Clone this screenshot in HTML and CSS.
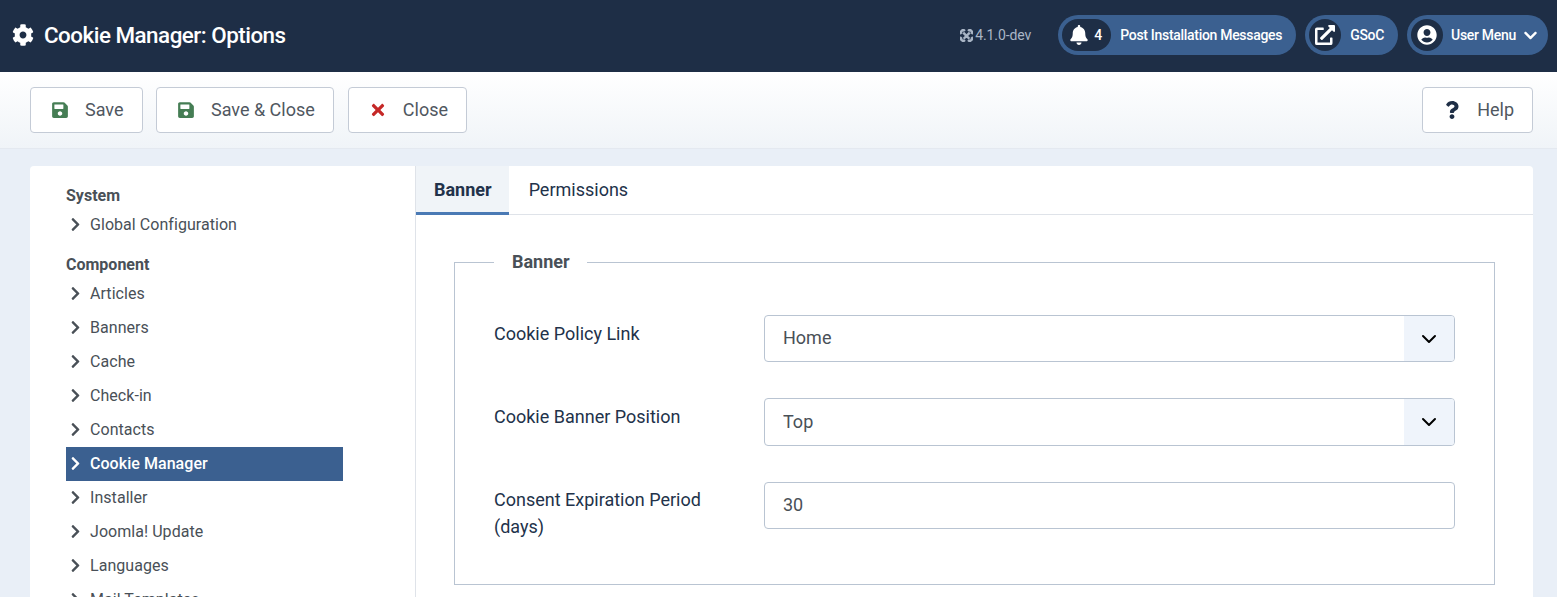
FILE: index.html
```html
<!DOCTYPE html>
<html lang="en">
<head>
<meta charset="utf-8">
<title>Cookie Manager: Options</title>
<link rel="stylesheet" href="styles.css">
</head>
<body>
<svg class="defs" aria-hidden="true">
  <symbol id="i-cog" viewBox="0 0 512 512"><path d="M487.4 315.7l-42.6-24.6c4.3-23.2 4.3-47 0-70.2l42.6-24.6c4.9-2.8 7.1-8.6 5.5-14-11.1-35.6-30-67.8-54.7-94.6-3.8-4.1-10-5.1-14.8-2.3L380.8 110c-17.9-15.4-38.5-27.3-60.8-35.1V25.8c0-5.6-3.9-10.5-9.4-11.7-36.7-8.2-74.3-7.8-109.2 0-5.5 1.2-9.4 6.1-9.4 11.7V75c-22.2 7.9-42.8 19.8-60.8 35.1L88.7 85.5c-4.9-2.8-11-1.9-14.8 2.3-24.7 26.7-43.6 58.9-54.7 94.6-1.7 5.4.6 11.2 5.5 14L67.3 221c-4.3 23.2-4.3 47 0 70.2l-42.6 24.6c-4.9 2.8-7.1 8.6-5.5 14 11.1 35.6 30 67.8 54.7 94.6 3.8 4.1 10 5.1 14.8 2.3l42.6-24.6c17.9 15.4 38.5 27.3 60.8 35.1v49.2c0 5.6 3.9 10.5 9.4 11.7 36.7 8.2 74.3 7.8 109.2 0 5.5-1.2 9.4-6.1 9.4-11.7v-49.2c22.2-7.9 42.8-19.8 60.8-35.1l42.6 24.6c4.9 2.8 11 1.9 14.8-2.3 24.7-26.7 43.6-58.9 54.7-94.6 1.5-5.5-.7-11.3-5.6-14.1zM256 336c-44.1 0-80-35.9-80-80s35.9-80 80-80 80 35.9 80 80-35.9 80-80 80z"/></symbol>
  <symbol id="i-save" viewBox="0 0 448 512"><path d="M433.941 129.941l-83.882-83.882A48 48 0 0 0 316.118 32H48C21.49 32 0 53.49 0 80v352c0 26.51 21.49 48 48 48h352c26.51 0 48-21.49 48-48V163.882a48 48 0 0 0-14.059-33.941zM224 416c-35.346 0-64-28.654-64-64 0-35.346 28.654-64 64-64s64 28.654 64 64c0 35.346-28.654 64-64 64zm96-304.52V212c0 6.627-5.373 12-12 12H76c-6.627 0-12-5.373-12-12V108c0-6.627 5.373-12 12-12h228.52c3.183 0 6.235 1.264 8.485 3.515l3.48 3.48A11.996 11.996 0 0 1 320 111.48z"/></symbol>
  <symbol id="i-times" viewBox="0 0 352 512"><path d="M242.72 256l100.07-100.07c12.28-12.28 12.28-32.19 0-44.48l-22.24-22.24c-12.28-12.28-32.19-12.28-44.48 0L176 189.28 75.93 89.21c-12.28-12.28-32.19-12.28-44.48 0L9.21 111.45c-12.28 12.28-12.28 32.19 0 44.48L109.28 256 9.21 356.07c-12.28 12.28-12.28 32.19 0 44.48l22.24 22.24c12.28 12.28 32.2 12.28 44.48 0L176 322.72l100.07 100.07c12.28 12.28 32.2 12.28 44.48 0l22.24-22.24c12.28-12.28 12.28-32.19 0-44.48L242.72 256z"/></symbol>
  <symbol id="i-question" viewBox="0 0 384 512"><path d="M202.021 0C122.202 0 70.503 32.703 29.914 91.026c-7.363 10.58-5.093 25.086 5.178 32.874l43.138 32.709c10.373 7.865 25.132 6.026 33.253-4.148 25.049-31.381 43.63-49.449 82.757-49.449 30.764 0 68.816 19.799 68.816 49.631 0 22.552-18.617 34.134-48.993 51.164-35.423 19.86-82.299 44.576-82.299 106.405V320c0 13.255 10.745 24 24 24h72.471c13.255 0 24-10.745 24-24v-5.773c0-42.86 125.268-44.645 125.268-160.627C377.504 66.256 286.902 0 202.021 0zM192 373.459c-38.196 0-69.271 31.075-69.271 69.271 0 38.195 31.075 69.27 69.271 69.27s69.271-31.075 69.271-69.271-31.075-69.27-69.271-69.27z"/></symbol>
  <symbol id="i-bell" viewBox="0 0 448 512"><path d="M224 512c35.32 0 63.97-28.65 63.97-64H160.03c0 35.35 28.65 64 63.97 64zm215.39-149.71c-19.32-20.76-55.47-51.99-55.47-154.29 0-77.7-54.48-139.9-127.94-155.16V32c0-17.67-14.32-32-31.98-32s-31.98 14.33-31.98 32v20.84C118.56 68.1 64.08 130.3 64.08 208c0 102.3-36.15 133.53-55.47 154.29-6 6.45-8.66 14.16-8.61 21.71.11 16.4 12.98 32 32.1 32h383.8c19.12 0 32-15.6 32.1-32 .05-7.55-2.61-15.27-8.61-21.71z"/></symbol>
  <symbol id="i-ext" viewBox="0 0 512 512"><path d="M432,320H400a16,16,0,0,0-16,16V448H64V128H208a16,16,0,0,0,16-16V80a16,16,0,0,0-16-16H48A48,48,0,0,0,0,112V464a48,48,0,0,0,48,48H400a48,48,0,0,0,48-48V336A16,16,0,0,0,432,320ZM488,0h-128c-21.37,0-32.05,25.91-17,41l35.73,35.73L135,320.37a24,24,0,0,0,0,34L157.67,377a24,24,0,0,0,34,0L435.28,133.32,471,169c15,15,41,4.5,41-17V24A24,24,0,0,0,488,0Z"/></symbol>
  <symbol id="i-user" viewBox="0 0 496 512"><path d="M248 8C111 8 0 119 0 256s111 248 248 248 248-111 248-248S385 8 248 8zm0 96c48.6 0 88 39.4 88 88s-39.4 88-88 88-88-39.4-88-88 39.4-88 88-88zm0 344c-58.7 0-111.3-26.6-146.5-68.2 18.8-35.4 55.6-59.8 98.5-59.8 2.4 0 4.8.4 7.1 1.1 13 4.2 26.6 6.9 40.9 6.9 14.3 0 28-2.7 40.9-6.9 2.3-.7 4.7-1.1 7.1-1.1 42.9 0 79.7 24.4 98.5 59.8C359.3 421.4 306.7 448 248 448z"/></symbol>
  <symbol id="i-right" viewBox="0 0 320 512"><path d="M285.476 272.971L91.132 467.314c-9.373 9.373-24.569 9.373-33.941 0l-22.667-22.667c-9.357-9.357-9.375-24.522-.04-33.901L188.505 256 34.484 101.255c-9.335-9.379-9.317-24.544.04-33.901l22.667-22.667c9.373-9.373 24.569-9.373 33.941 0L285.475 239.03c9.373 9.372 9.373 24.568.001 33.941z"/></symbol>
  <symbol id="i-down" viewBox="0 0 448 512"><path d="M207.029 381.476L12.686 187.132c-9.373-9.373-9.373-24.569 0-33.941l22.667-22.667c9.357-9.357 24.522-9.375 33.901-.04L224 284.505l154.745-154.021c9.379-9.335 24.544-9.317 33.901.04l22.667 22.667c9.373 9.373 9.373 24.569 0 33.941L240.971 381.476c-9.373 9.372-24.569 9.372-33.942 0z"/></symbol>
</svg>

<header class="topbar">
  <svg class="title-icon"><use href="#i-cog"/></svg>
  <h1 class="title">Cookie Manager: Options</h1>
  <div class="top-tools">
    <span class="version">
      <svg class="joomla" viewBox="0 0 16 16"><path d="M4 4.5 11.5 12M12 4.5 4.5 12M2 6a2.4 2.4 0 0 1 4-3.6M10 2.4A2.4 2.4 0 0 1 14 6M14 10a2.4 2.4 0 0 1-4 3.6M6 13.6A2.4 2.4 0 0 1 2 10"/></svg>4.1.0-dev
    </span>
    <a class="pill pill-messages" href="#">
      <span class="pill-badge badge-wide"><svg class="bell"><use href="#i-bell"/></svg><span class="count">4</span></span>
      <span class="pill-text">Post Installation Messages</span>
    </a>
    <a class="pill pill-gsoc" href="#">
      <span class="pill-badge"><svg class="pill-icon"><use href="#i-ext"/></svg></span>
      <span class="pill-text">GSoC</span>
    </a>
    <a class="pill pill-user" href="#">
      <span class="pill-badge"><svg class="pill-icon"><use href="#i-user"/></svg></span>
      <span class="pill-text">User Menu</span>
      <svg class="pill-caret"><use href="#i-down"/></svg>
    </a>
  </div>
</header>

<nav class="toolbar">
  <button class="btn btn-save" type="button"><svg class="btn-icon green"><use href="#i-save"/></svg>Save</button>
  <button class="btn btn-saveclose" type="button"><svg class="btn-icon green"><use href="#i-save"/></svg>Save &amp; Close</button>
  <button class="btn btn-close" type="button"><svg class="btn-icon red"><use href="#i-times"/></svg>Close</button>
  <button class="btn btn-help" type="button"><svg class="btn-icon navy"><use href="#i-question"/></svg>Help</button>
</nav>

<main class="content">
  <div class="card">
    <aside class="sidebar">
      <h2 class="side-heading">System</h2>
      <ul class="side-list">
        <li><a class="side-link" href="#"><svg class="chev"><use href="#i-right"/></svg>Global Configuration</a></li>
      </ul>
      <h2 class="side-heading">Component</h2>
      <ul class="side-list">
        <li><a class="side-link" href="#"><svg class="chev"><use href="#i-right"/></svg>Articles</a></li>
        <li><a class="side-link" href="#"><svg class="chev"><use href="#i-right"/></svg>Banners</a></li>
        <li><a class="side-link" href="#"><svg class="chev"><use href="#i-right"/></svg>Cache</a></li>
        <li><a class="side-link" href="#"><svg class="chev"><use href="#i-right"/></svg>Check-in</a></li>
        <li><a class="side-link" href="#"><svg class="chev"><use href="#i-right"/></svg>Contacts</a></li>
        <li><a class="side-link active" href="#"><svg class="chev"><use href="#i-right"/></svg>Cookie Manager</a></li>
        <li><a class="side-link" href="#"><svg class="chev"><use href="#i-right"/></svg>Installer</a></li>
        <li><a class="side-link" href="#"><svg class="chev"><use href="#i-right"/></svg>Joomla! Update</a></li>
        <li><a class="side-link" href="#"><svg class="chev"><use href="#i-right"/></svg>Languages</a></li>
        <li><a class="side-link" href="#"><svg class="chev"><use href="#i-right"/></svg>Mail Templates</a></li>
      </ul>
    </aside>
    <section class="panel">
      <div class="tabs">
        <button class="tab tab-active" type="button">Banner</button>
        <button class="tab" type="button">Permissions</button>
      </div>
      <form class="tab-body">
        <fieldset class="group">
          <legend class="group-title">Banner</legend>
          <div class="field">
            <label class="field-label" for="f1">Cookie Policy Link</label>
            <div class="select-wrap">
              <select class="control" id="f1"><option>Home</option></select>
              <span class="select-arrow"><svg viewBox="0 0 16 16"><path d="M2 5l6 6 6-6"/></svg></span>
            </div>
          </div>
          <div class="field">
            <label class="field-label" for="f2">Cookie Banner Position</label>
            <div class="select-wrap">
              <select class="control" id="f2"><option>Top</option></select>
              <span class="select-arrow"><svg viewBox="0 0 16 16"><path d="M2 5l6 6 6-6"/></svg></span>
            </div>
          </div>
          <div class="field">
            <label class="field-label" for="f3">Consent Expiration Period (days)</label>
            <input class="control" id="f3" type="text" value="30">
          </div>
        </fieldset>
      </form>
    </section>
  </div>
</main>
</body>
</html>
```

FILE: styles.css
```css
* { box-sizing: border-box; }
html, body { height: 100%; overflow: hidden; }
body {
  margin: 0;
  background: #e9eff7;
  color: #22324a;
  font-family: Roboto, "Liberation Sans", sans-serif;
  font-size: 16px;
}
a { text-decoration: none; color: inherit; }
.defs { display: none; }

.topbar {
  display: flex;
  align-items: center;
  height: 72px;
  padding: 0 9px 2px 12px;
  background: #1e2e46;
  color: #fff;
}
.title-icon { width: 22px; height: 22px; fill: #fff; margin-right: 10px; }
.title { margin: 0; font-size: 22.4px; font-weight: 500; letter-spacing: -0.5px; }
.top-tools { display: flex; align-items: center; margin-left: auto; }
.version {
  display: flex;
  align-items: center;
  margin-right: 27px;
  font-size: 14px;
  letter-spacing: -0.1px;
  color: #a9b5c5;
}
.joomla { width: 13px; height: 13px; fill: none; stroke: #a9b5c5; stroke-width: 3; margin-right: 2px; }
.pill {
  display: flex;
  align-items: center;
  height: 40px;
  margin-left: 9px;
  padding: 0 14px 0 4px;
  border-radius: 20px;
  background: #3b6090;
  color: #fff;
  font-size: 14px;
  font-weight: 500;
}
.pill-badge {
  display: flex;
  align-items: center;
  justify-content: center;
  width: 32px;
  height: 32px;
  border-radius: 16px;
  background: #1e2e46;
  margin-right: 8px;
}
.pill-gsoc .pill-badge { margin-right: 9px; }
.badge-wide { width: 49px; margin-right: 9px; padding-right: 1px; }
.bell { width: 18px; height: 20px; fill: #fff; margin-right: 6px; }
.count { font-size: 14px; }
.pill-icon { width: 20px; height: 20px; fill: #fff; }
.pill-text { letter-spacing: -0.3px; }
.pill-caret { width: 13px; height: 15px; fill: #fff; margin-left: 8px; }
.pill-messages { margin-left: 0; }
.pill-user { padding-right: 11px; }

.toolbar {
  display: flex;
  align-items: center;
  gap: 13.5px;
  height: 77px;
  padding: 0 24px 1px 30px;
  background: linear-gradient(#fff, #f0f4f8);
  border-bottom: 1px solid #e4e9f0;
}
.btn {
  display: flex;
  align-items: center;
  height: 46px;
  padding: 0 18px 0 20px;
  border: 1px solid #c4cbd6;
  border-radius: 4px;
  background: #fff;
  color: #50575f;
  font: 400 18px Roboto, "Liberation Sans", sans-serif;
}
.btn-close { margin-left: 0.5px; padding-right: 17.5px; }
.btn-help { margin-left: auto; }
.btn-icon { width: 18px; height: 18px; margin-right: 16px; }
.green { fill: #457d54; }
.red { fill: #c52827; }
.navy { fill: #1e2e46; }

.content { padding: 17px 24px 0 30px; }
.card {
  display: flex;
  border-radius: 4px 4px 0 0;
  background: #fff;
  min-height: 500px;
}
.sidebar {
  flex: 0 0 386px;
  padding: 18px 72px 0 36px;
  border-right: 1px solid #dfe3e9;
}
.side-heading {
  margin: 0;
  font-size: 16px;
  line-height: 24px;
  font-weight: 700;
  color: #495057;
}
.side-list { margin: 0 0 11px; padding: 0; list-style: none; }
.side-link {
  display: flex;
  align-items: center;
  height: 34px;
  padding: 0 0 2px 4px;
  color: #495057;
  font-size: 16px;
  letter-spacing: 0.05px;
}
.chev { width: 11px; height: 15px; fill: #495057; margin-right: 9px; }
.side-link.active { background: #3b6090; color: #fff; font-weight: 500; }
.side-link.active .chev { fill: #fff; }

.panel { flex: 1; min-width: 0; }
.tabs { display: flex; align-items: flex-start; height: 49px; border-bottom: 1px solid #dfe3e9; }
.tab {
  height: 48px;
  padding: 0 19px 2px 20px;
  border: 0;
  background: #fff;
  color: #22324a;
  font: 400 18px Roboto, "Liberation Sans", sans-serif;
}
.tab-active {
  height: 49px;
  padding: 0 17px 0 18px;
  background: #f0f4f8;
  border-bottom: 3px solid #4a7ab5;
  font-weight: 700;
}
.tab-body { padding: 34px 38px 0; }
.group {
  margin: 0;
  padding: 40px 39px 44px;
  border: 1px solid #b9c4d2;
  min-width: 0;
}
.group-title {
  padding: 0 17px 0 18px;
  font-size: 18px;
  line-height: 26px;
  font-weight: 700;
  color: #495057;
}
.field {
  display: grid;
  grid-template-columns: 270px 1fr;
  margin-bottom: 36px;
}
.field:last-child { margin-bottom: 0; }
.field-label {
  padding: 5px 40px 0 0;
  font-size: 18px;
  line-height: 27px;
  color: #22324a;
}
.field:last-child .field-label { padding-top: 4px; }
.control {
  display: block;
  width: 100%;
  height: 47.4px;
  padding: 0 18px 2px;
  border: 1px solid #b9c4d2;
  border-radius: 4px;
  background: #fff;
  color: #495057;
  font: 400 18px Roboto, "Liberation Sans", sans-serif;
  appearance: none;
}
.select-wrap { position: relative; }
.select-arrow {
  position: absolute;
  top: 1px;
  right: 1px;
  bottom: 1px;
  width: 50px;
  display: flex;
  align-items: center;
  justify-content: center;
  border-radius: 0 3px 3px 0;
  background: #eff4fb;
}
.select-arrow svg { width: 16px; height: 16px; fill: none; stroke: #000; stroke-width: 2; stroke-linecap: round; stroke-linejoin: round; }
```
